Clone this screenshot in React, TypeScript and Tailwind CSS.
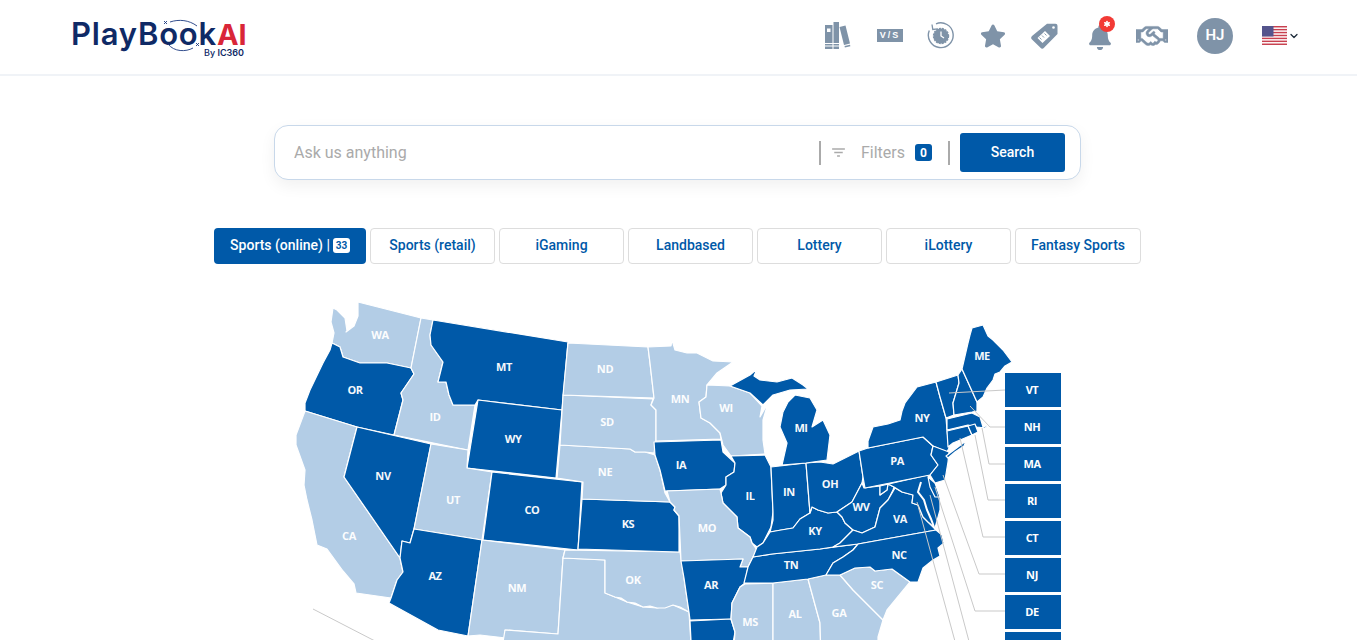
import { FaBell, FaRegHandshake, FaStar } from "react-icons/fa";
import { MdFilterList } from "react-icons/md";
import { Asterisk, ChevronDown } from "lucide-react";

const blue = "#0059a8";
const pale = "#b3cde6";

const tabs = ["Sports (retail)", "iGaming", "Landbased", "Lottery", "iLottery"];

// outlines are in page coordinates, the svg's viewBox starts at 290,295
const states: { on: boolean; pts: string }[] = [
  { on: false, pts: "358,302 421,318 411,368 387,363 360,363 343,357 340,347 332,343 334,333 331,322 333,308 337,310 345,318 347,331 346,332 354,326 358,316" },
  { on: true, pts: "332,343 340,347 343,357 360,363 387,363 411,368 414,374 401,393 403,400 394,435 357,427 305,411 305,403 310,390 323,363 330,350" },
  { on: false, pts: "421,318 433,320 430,335 431,345 443,362 438,382 446,382 449,395 453,405 475,405 468,450 394,435 403,400 401,393 414,374 411,368" },
  { on: true, pts: "433,320 568,342 562,410 478,400 475,405 453,405 449,395 446,382 438,382 443,362 431,345 430,335" },
  { on: true, pts: "478,400 562,410 556,478 467,468" },
  { on: false, pts: "305,411 357,427 344,477 400,558 403,572 397,580 391,598 356,593 354,584 343,571 327,549 317,545 312,520 307,500 304,485 305,470 296,445 296,435" },
  { on: true, pts: "357,427 431,444 414,529 410,543 402,541 400,558 344,477" },
  { on: false, pts: "431,444 468,450 467,468 492,472 482,540 414,529" },
  { on: true, pts: "492,472 582,482 578,550 483,540" },
  { on: true, pts: "414,529 482,540 468,636 438,630 389,603 391,598 397,580 403,572 400,558 402,541 410,543" },
  { on: false, pts: "482,540 565,550 563,558 558,634 505,630 506,638 480,635 468,636" },
  { on: false, pts: "563,558 605,560 605,593 615,597 627,602 643,607 657,608 673,605 689,612 692,660 500,660 505,630 558,634" },
  { on: false, pts: "565,550 680,552 684,578 689,612 680,607 673,605 665,608 657,608 650,606 643,607 635,603 627,602 621,598 615,597 605,593 605,560 563,558" },
  { on: true, pts: "582,499 670,502 675,507 674,510 679,516 679,552 578,549" },
  { on: false, pts: "560,445 630,449 635,452 645,452 655,455 660,470 665,493 670,502 582,499 583,482 557,478" },
  { on: false, pts: "563,395 653,399 651,405 656,410 656,440 654,453 645,452 635,452 630,449 560,445" },
  { on: false, pts: "568,343 648,347 650,363 654,398 563,395" },
  { on: false, pts: "648,347 671,346 672,340 675,350 687,353 697,353 713,361 733,362 717,373 707,385 706,397 699,402 701,418 710,423 720,433 721,439 656,441 656,410 651,405 654,398 650,363" },
  { on: false, pts: "707,385 730,386 750,393 762,406 760,417 768,403 763,420 763,440 765,454 731,456 723,445 720,433 710,423 701,418 699,402 706,397" },
  { on: true, pts: "654,442 721,440 723,452 735,463 734,472 726,477 726,485 720,489 665,491 660,470 655,455" },
  { on: true, pts: "731,456 765,455 771,467 773,512 771,527 763,543 757,547 752,543 750,537 738,528 737,517 723,503 721,493 726,485 726,477 734,472 735,463" },
  { on: true, pts: "771,467 806,463 810,513 800,519 793,528 770,532 773,520 773,512" },
  { on: false, pts: "667,491 720,489 721,493 723,503 737,517 738,528 750,537 752,543 757,550 753,557 748,567 740,567 743,559 681,561 679,516 674,510 675,507 670,502" },
  { on: true, pts: "681,561 743,559 740,567 748,567 745,583 740,587 732,603 731,619 690,620 689,612 684,578" },
  { on: true, pts: "690,621 731,619 735,632 730,660 692,660" },
  { on: false, pts: "745,584 773,583 773,660 733,660 735,632 731,619 732,603 740,587" },
  { on: false, pts: "773,583 808,579 820,623 821,660 773,660" },
  { on: false, pts: "808,579 826,575 840,575 853,590 873,610 883,620 878,637 878,660 821,660 820,623" },
  { on: false, pts: "840,575 855,568 870,567 875,571 892,569 910,582 887,610 883,620 873,610 853,590" },
  { on: true, pts: "744,583 748,567 753,557 772,554 820,549 858,544 853,550 843,557 833,563 826,575 808,579 773,583" },
  { on: true, pts: "757,547 763,543 770,532 781,530 793,528 800,519 810,513 812,507 818,510 828,513 837,512 842,517 845,523 853,530 840,543 833,547 820,549 772,554 753,557" },
  { on: true, pts: "806,463 820,462 833,464 859,451 863,477 862,483 852,502 837,512 828,513 818,510 812,507 810,513" },
  { on: true, pts: "837,512 852,502 862,483 864,488 880,486 880,495 887,490 888,484 894,487 893,490 888,500 880,508 875,527 862,533 853,530 845,523 842,517" },
  { on: true, pts: "833,547 840,543 853,530 862,533 875,527 880,508 888,500 895,488 902,492 913,495 912,503 918,505 923,517 928,522 936,530 858,544" },
  { on: true, pts: "858,544 936,530 942,535 944,543 938,548 940,556 933,560 923,568 918,582 910,582 892,569 875,571 870,567 855,568 840,575 826,575 833,563 843,557 853,550" },
  { on: true, pts: "880,486 928,475 932,490 940,497 940,510 935,528 928,522 923,517 918,505 912,503 913,495 902,492 894,487 888,484 887,490 880,495" },
  { on: true, pts: "928,477 935,483 940,497 935,497 930,487" },
  { on: true, pts: "859,451 868,448 923,437 933,446 931,455 938,465 930,475 865,488 863,477" },
  { on: true, pts: "868,448 868,441 873,427 888,424 900,420 902,411 905,403 917,387 936,382 940,397 946,418 947,430 949,448 947,452 933,446 923,437" },
  { on: true, pts: "933,446 949,452 948,462 945,480 935,483 930,475 938,465 931,455" },
  { on: true, pts: "946,456 958,447 966,441 964,446 955,452 948,458" },
  { on: true, pts: "936,382 958,375 959,383 953,403 954,415 946,418 940,397" },
  { on: true, pts: "962,369 977,402 977,411 972,412 954,415 953,403 959,383 958,375" },
  { on: true, pts: "962,369 968,343 970,335 972,328 983,325 988,336 993,340 1003,350 1012,362 1005,366 1000,372 995,374 993,380 987,388 983,397 977,402" },
  { on: true, pts: "947,419 972,413 980,417 983,427 992,424 985,428 977,427 968,425 947,430" },
  { on: true, pts: "947,431 968,426 972,435 953,443 948,447" },
  { on: true, pts: "968,426 975,424 978,432 972,435" },
  { on: true, pts: "730,386 750,375 757,369 754,376 760,380 777,382 792,378 803,385 808,389 790,390 773,395 763,405 750,393" },
  { on: true, pts: "795,395 810,398 817,410 812,427 823,420 830,435 827,460 806,463 782,465 787,443 780,427 783,412 788,402" },
];

const labels: [string, number, number][] = [
  ["WA", 380, 335], ["OR", 355, 390], ["MT", 504, 367], ["ID", 435, 417], ["WY", 513, 439], ["NV", 383, 476],
  ["UT", 453, 500], ["CO", 532, 510], ["CA", 349, 536], ["AZ", 435, 576], ["NM", 517, 588], ["ND", 605, 369],
  ["SD", 607, 422], ["NE", 605, 472], ["KS", 628, 524], ["OK", 633, 580], ["MN", 680, 399], ["WI", 726, 408],
  ["IA", 681, 465], ["MO", 707, 528], ["AR", 711, 585], ["IL", 750, 496], ["IN", 789, 492], ["MI", 801, 428],
  ["OH", 830, 484], ["KY", 815, 531], ["TN", 791, 565], ["MS", 750, 622], ["AL", 795, 614], ["GA", 839, 613],
  ["SC", 877, 585], ["WV", 861, 507], ["VA", 900, 519], ["NC", 899, 555], ["PA", 897, 461], ["NY", 922, 418],
  ["ME", 982, 356],
];

const boxes = ["VT", "NH", "MA", "RI", "CT", "NJ", "DE"];

const leaders = [
  "949,393 1005,390",
  "970,406 990,427 1005,427",
  "982,428 989,464 1005,464",
  "975,435 988,500 1005,500",
  "960,438 983,537 1005,537",
  "943,475 979,574 1005,574",
  "935,487 975,611 1005,611",
  "930,495 970,645",
  "917,502 956,645",
  "313,609 375,641",
];

function UsMap() {
  return (
    <svg viewBox="290 295 780 345" className="mt-[31px] ml-[290px] block h-[345px] w-[780px]">
      {states.map((s, i) => (
        <polygon key={i} points={s.pts} fill={s.on ? blue : pale} stroke="#fff" strokeWidth="1.2" strokeLinejoin="round" />
      ))}
      <polyline points="921,482 918,492 924,500 927,510 931,519 934,527" fill="none" stroke="#fff" strokeWidth="2" />
      {leaders.map((p) => (
        <polyline key={p} points={p} fill="none" stroke="#c9c9c9" strokeWidth="1" />
      ))}
      {labels.map(([t, x, y]) => (
        <text key={t} x={x} y={y + 4} textAnchor="middle" fill="#fff" fontSize="11" fontWeight="700" fontFamily="'Open Sans', sans-serif" letterSpacing="-0.4" opacity={0.96}>
          {t}
        </text>
      ))}
      {boxes.map((t, i) => (
        <g key={t}>
          <rect x="1005" y={373 + i * 37} width="56" height="34" fill={blue} />
          <text x="1032" y={393.5 + i * 37} textAnchor="middle" fill="#fff" fontSize="11" fontWeight="700" fontFamily="'Open Sans', sans-serif" letterSpacing="-0.4">
            {t}
          </text>
        </g>
      ))}
      <rect x="1005" y="632" width="56" height="34" fill={blue} />
    </svg>
  );
}

function Logo() {
  return (
    <div className="relative h-[46px] w-[176px] font-['Inter',sans-serif]">
      <div className="absolute top-[6px] left-0 flex items-baseline text-[31px] leading-[28px] font-semibold">
        <span className="tracking-[0.8px] text-[#0f2a66]">PlayBook</span>
        <span className="text-[29px] font-bold text-[#d92638]">AI</span>
      </div>
      <svg viewBox="0 0 176 46" className="absolute inset-0 h-[46px] w-[176px]" fill="none" stroke="#1c3a80" strokeWidth="0.9">
        <path d="M93 7l3 3m0-3l-3 3M99 8C108 5 118 6 126 12" />
        <path d="M125 29l3 3m0-3l-3 3M97 30C103 38 115 38 122 34" />
      </svg>
      <div className="absolute top-[34px] left-[133px] text-[9px] leading-[10px] font-medium whitespace-nowrap text-[#0f2a66]">
        By <span className="font-semibold">IC360</span>
      </div>
    </div>
  );
}

function BooksIcon() {
  return (
    <svg viewBox="0 0 26 27" className="h-[27px] w-[26px]" fill="#7f93a8">
      <path d="M0 3h7.5v18H0zM0 22h7.5v1.5H0zM0 24.5h7.5V27H0zM8.500 0H14v21H8.500zM8.500 22H14v1.5H8.500zM8.500 24.5H14V27H8.500z" />
      <path d="M14.500 5l6-1.500 4.500 18-6 1.500zM19.500 24l5.500-1.300.4 1.500-5.500 1.300z" />
      <rect x="2" y="6.500" width="3.500" height="3.500" fill="#fff" />
    </svg>
  );
}

function VersusIcon() {
  return (
    <div className="flex h-[13px] w-[26px] items-center justify-center bg-[#7f93a8] font-['Liberation_Sans',sans-serif] text-[9px] font-bold tracking-[2px] text-white">
      V/S
    </div>
  );
}

function ClockIcon() {
  return (
    <svg viewBox="0 0 27 27" className="h-[27px] w-[27px]" fill="none" stroke="#7f93a8" strokeWidth="1.4">
      <path d="M9 1.800A12.400 12.400 0 1 1 2.300 8.500" />
      <path d="M5 2.500l.8 5 5-.6" strokeWidth="1.300" />
      <circle cx="14" cy="14" r="7.500" fill="#7f93a8" strokeDasharray="2 1" />
      <path d="M14 9.500V14l3 2" stroke="#fff" strokeWidth="1.300" />
    </svg>
  );
}

function TagIcon() {
  return (
    <svg viewBox="0 0 27 26" className="h-[26px] w-[27px]" fill="#7f93a8">
      <path d="M16 .8h8.500a2 2 0 0 1 2 2V11L13 24.800a2.500 2.500 0 0 1-3.500 0L1 16.500a2.500 2.500 0 0 1 0-3.500z" />
      <circle cx="22.500" cy="4.500" r="1.300" fill="#fff" />
      <path d="M6.500 15l7.500-7 5 5-7.500 7z" fill="#fff" />
      <path d="M10.500 16.500l-2-2M13 14.500l-2-2M15.500 12.500l-2-2" stroke="#7f93a8" strokeWidth="0.9" />
    </svg>
  );
}

function FlagIcon() {
  const stripes = [0, 1, 2, 3, 4, 5, 6];
  return (
    <svg viewBox="0 0 25 19" className="h-[19px] w-[25px]">
      <rect width="25" height="19" fill="#fff" />
      {stripes.map((i) => (
        <rect key={i} y={i * 2.92} width="25" height="1.46" fill="#c8404f" />
      ))}
      <rect width="11.500" height="10.500" fill="#54548c" />
    </svg>
  );
}

export default function App() {
  return (
    <div className="h-[640px] overflow-hidden bg-white font-['Roboto',sans-serif]">
      <header className="flex h-[76px] items-center justify-between border-b-2 border-[#f0f3f7] pr-[57px] pl-[71px]">
        <Logo />
        <nav className="mb-[3px] flex items-center">
          <BooksIcon />
          <div className="ml-[26px]"><VersusIcon /></div>
          <div className="ml-[24px]"><ClockIcon /></div>
          <FaStar className="ml-[26px] text-[26px] text-[#7f93a8]" />
          <div className="ml-[25px]"><TagIcon /></div>
          <div className="relative ml-[30px] flex h-[28px] w-[24px] items-end">
            <FaBell className="text-[25px] text-[#7f93a8]" />
            <span className="absolute -top-[6px] left-[11px] flex h-[16px] w-[16px] items-center justify-center rounded-full bg-[#f23a35] text-white">
              <Asterisk className="h-[10px] w-[10px]" strokeWidth={4} />
            </span>
          </div>
          <FaRegHandshake className="ml-[24px] stroke-current stroke-[10] text-[32px] text-[#7f93a8]" />
          <div className="ml-[29px] flex h-[36px] w-[36px] items-center justify-center rounded-full bg-[#7f93a8] text-[15px] font-semibold text-white">
            HJ
          </div>
          <div className="ml-[29px]"><FlagIcon /></div>
          <ChevronDown className="ml-[1px] h-[12px] w-[12px] text-[#1d2b3a]" strokeWidth={2.5} />
        </nav>
      </header>

      <div className="mx-[274px] mt-[49px] flex h-[55px] w-[807px] items-center rounded-[14px] border border-[#c8d8ea] bg-white pr-[15px] pl-[19px] shadow-[0_6px_16px_rgba(0,0,0,0.06)]">
        <input
          placeholder="Ask us anything"
          className="min-w-0 flex-1 bg-transparent text-[16px] outline-none placeholder:text-[#aaaaaa]"
        />
        <div className="h-[24px] w-[2px] bg-[#aaaaaa]" />
        <MdFilterList className="ml-[9px] text-[17px] text-[#aaaaaa]" />
        <span className="ml-[14px] text-[16px] text-[#aaaaaa]">Filters</span>
        <span className="ml-[10px] flex h-[17px] w-[17px] items-center justify-center rounded-[3px] bg-[#0059a8] text-[12px] font-bold text-white">
          0
        </span>
        <div className="ml-[16px] h-[24px] w-[2px] bg-[#aaaaaa]" />
        <button className="ml-[10px] h-[39px] w-[105px] rounded-[3px] bg-[#0059a8] text-[14px] font-medium text-white">
          Search
        </button>
      </div>

      <div className="mt-[48px] flex gap-[4px] pl-[214px]">
        <div className="flex h-[36px] w-[152px] items-center justify-center gap-[3px] rounded-[4px] bg-[#0059a8] pb-[1px] text-[14px] font-medium text-white">
          Sports (online) |
          <span className="flex h-[15px] w-[17px] items-center justify-center rounded-[3px] bg-white text-[10px] font-bold text-[#0059a8]">
            33
          </span>
        </div>
        {tabs.map((t) => (
          <div
            key={t}
            className="flex h-[36px] w-[125px] items-center justify-center rounded-[4px] border border-[#dddddd] pb-[1px] text-[14px] font-medium text-[#0059a8]"
          >
            {t}
          </div>
        ))}
        <div className="flex h-[36px] w-[126px] items-center justify-center rounded-[4px] border border-[#dddddd] pb-[1px] text-[14px] font-medium text-[#0059a8]">
          Fantasy Sports
        </div>
      </div>

      <UsMap />
    </div>
  );
}
